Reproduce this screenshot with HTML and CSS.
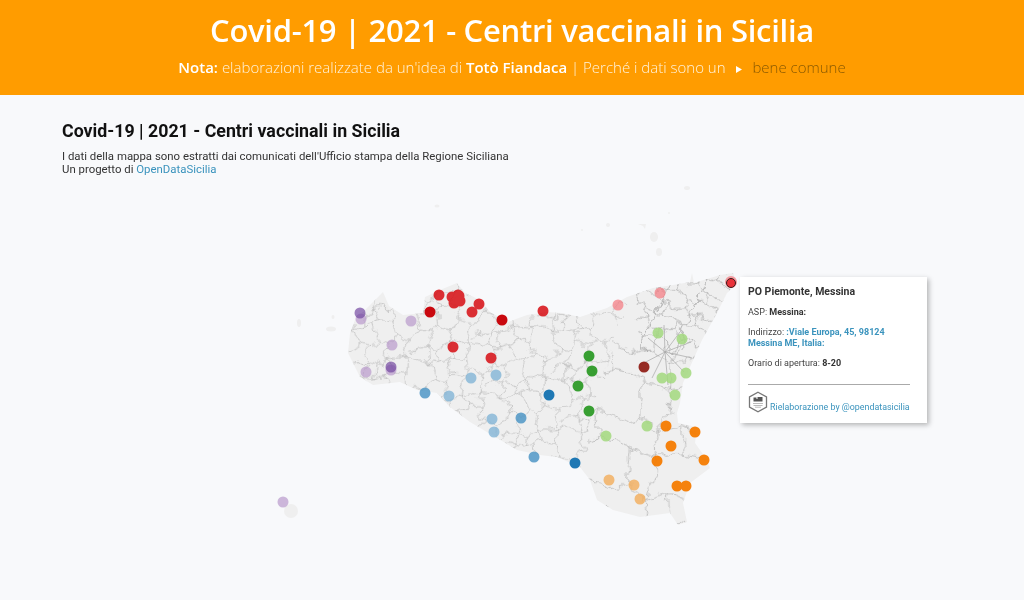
FILE: index.html
```html
<!DOCTYPE html>
<html lang="it">
<head>
<meta charset="utf-8">
<title>Covid-19 | 2021 - Centri vaccinali in Sicilia</title>
<link rel="stylesheet" href="styles.css">
</head>
<body>
<header class="banner">
  <h1 class="banner-title">Covid-19 | 2021 - Centri vaccinali in Sicilia</h1>
  <p class="banner-note"><b>Nota:</b> elaborazioni realizzate da un'idea di <b>Totò Fiandaca</b> | Perché i dati sono un <svg class="arrow" viewBox="0 0 6 7" aria-hidden="true"><path d="M0 0L6 3.500L0 7Z"/></svg> <span class="common">bene comune</span></p>
</header>
<main class="content">
  <svg class="map" viewBox="0 95 1024 505" aria-hidden="true">
    <defs>
      <pattern id="cellsA" width="104" height="84" patternUnits="userSpaceOnUse" patternTransform="rotate(-14) scale(0.62)">
        <path class="mesh" d="M0 14L14 8L30 16L42 6L60 14L74 8L90 18L104 14M14 8L12 0M12 84L9 62L0 56M9 62L24 66L30 46L14 38L9 62M14 38L0 34M14 38L30 16M30 46L48 40L60 14M48 40L54 64L24 66M54 64L72 70L80 46L48 40M80 46L90 18M80 46L104 56M72 70L70 84M70 0L74 8M42 6L42 0M42 84L40 65M90 40L104 34"/>
      </pattern>
      <pattern id="cellsB" width="120" height="96" patternUnits="userSpaceOnUse" patternTransform="rotate(11) scale(0.72)">
        <path class="mesh" d="M0 24L24 14L50 30L82 16L120 24M24 14L22 0M22 96L18 60L0 54M18 60L56 66L50 30M56 66L92 54L82 16M92 54L120 54M56 66L62 96M62 0L50 30"/>
      </pattern>
      <pattern id="cellsC" width="38" height="30" patternUnits="userSpaceOnUse" patternTransform="rotate(24) scale(0.85)">
        <path class="mesh" d="M0 8L10 3L19 10L28 5L38 8M10 3V0M10 30L7 20L0 18M7 20L19 23L19 10M19 23L30 19L28 5M30 19L38 18M19 23V30M19 0V10"/>
      </pattern>
      <filter id="wiggle" filterUnits="userSpaceOnUse" x="250" y="250" width="520" height="300">
        <feTurbulence type="fractalNoise" baseFrequency="0.075" numOctaves="3" seed="11"/>
        <feDisplacementMap in="SourceGraphic" scale="14" xChannelSelector="R" yChannelSelector="G"/>
      </filter>
      <clipPath id="island">
        <path d="M383 292L389 306L403 315L423 313L425 297L440 290L457 283L465 293L480 300L490 312L508 322L527 315L547 312L562 313L580 317L607 308L627 297L653 288L673 285L690 282L692 273L694 283L720 275L733 273L737 283L727 293L717 313L702 340L690 367L683 383L680 403L677 413L678 423L697 427L695 443L707 460L710 468L690 483L683 503L687 522L678 525L670 513L640 517L613 510L597 500L590 480L580 467L557 457L540 455L517 450L497 438L470 422L450 407L437 393L417 390L400 382L373 385L360 377L348 353L350 333L355 320L373 302L380 295Z"/>
      </clipPath>
      <clipPath id="zoneWest"><path d="M330 260H640L600 380L580 480H330Z"/></clipPath>
      <clipPath id="zoneSouth"><path d="M640 270L600 380L580 480L600 540H750V330L640 330Z"/></clipPath>
      <clipPath id="zoneNorth"><path d="M632 270H755L700 350H640Z"/></clipPath>
    </defs>

    <g class="islets">
      <ellipse cx="687" cy="188" rx="3" ry="2"/>
      <path d="M638 224L646 224L645 229L643 226Z"/>
      <ellipse cx="654" cy="237" rx="4" ry="5"/>
      <ellipse cx="659" cy="252" rx="3" ry="4"/>
      <ellipse cx="608" cy="225" rx="2" ry="2"/>
      <ellipse cx="582" cy="230" rx="1" ry="1"/>
      <ellipse cx="669" cy="213" rx="1" ry="1"/>
      <ellipse cx="437" cy="206" rx="2.500" ry="1.500"/>
      <ellipse cx="299" cy="323" rx="2" ry="4"/>
      <ellipse cx="331" cy="329" rx="5" ry="2.500"/>
      <ellipse cx="333" cy="317" rx="1.500" ry="2"/>
      <ellipse cx="291" cy="511" rx="7" ry="7"/>
    </g>

    <path class="land" d="M383 292L389 306L403 315L423 313L425 297L440 290L457 283L465 293L480 300L490 312L508 322L527 315L547 312L562 313L580 317L607 308L627 297L653 288L673 285L690 282L692 273L694 283L720 275L733 273L737 283L727 293L717 313L702 340L690 367L683 383L680 403L677 413L678 423L697 427L695 443L707 460L710 468L690 483L683 503L687 522L678 525L670 513L640 517L613 510L597 500L590 480L580 467L557 457L540 455L517 450L497 438L470 422L450 407L437 393L417 390L400 382L373 385L360 377L348 353L350 333L355 320L373 302L380 295Z"/>

    <g clip-path="url(#island)">
      <g class="borders">
        <g clip-path="url(#zoneWest)"><rect class="fill-a" x="330" y="260" width="320" height="220"/></g>
        <g clip-path="url(#zoneSouth)"><rect class="fill-b" x="580" y="320" width="170" height="220"/></g>
        <g clip-path="url(#zoneNorth)"><rect class="fill-c" x="632" y="265" width="120" height="90"/></g>
      </g>
      <path class="rays" d="M665 352L640 365M665 352L648 338M665 352L664 325M665 352L680 332M665 352L691 342M665 352L692 358M665 352L684 372M665 352L668 385M665 352L652 378"/>
    </g>

    <g class="d-purple">
      <circle cx="361" cy="319" r="5.500"/><circle cx="411" cy="321" r="5.500"/><circle cx="392" cy="345" r="5.500"/>
      <circle cx="391" cy="370" r="5.500"/><circle cx="366" cy="372" r="5.500"/><circle cx="283" cy="502" r="5.500"/>
    </g>
    <g class="d-purple-dark">
      <circle cx="360" cy="313" r="5.500"/><circle cx="391" cy="367" r="5.500"/>
    </g>
    <g class="d-red">
      <circle cx="439" cy="295" r="5.500"/><circle cx="452" cy="297" r="5.500"/><circle cx="458" cy="295" r="5.500"/>
      <circle cx="459" cy="296" r="5.500"/><circle cx="454" cy="303" r="5.500"/><circle cx="460" cy="301" r="5.500"/>
      <circle cx="479" cy="304" r="5.500"/><circle cx="472" cy="312" r="5.500"/><circle cx="543" cy="311" r="5.500"/>
      <circle cx="453" cy="347" r="5.500"/><circle cx="491" cy="358" r="5.500"/>
    </g>
    <g class="d-red-dark">
      <circle cx="430" cy="312" r="5.500"/><circle cx="502" cy="320" r="5.500"/>
    </g>
    <g class="d-pink">
      <circle cx="618" cy="305" r="5.500"/><circle cx="660" cy="293" r="5.500"/><circle cx="731" cy="282" r="6"/>
    </g>
    <circle class="d-selected" cx="731" cy="283" r="4.500"/>
    <circle class="d-maroon" cx="644" cy="367" r="5.500"/>
    <g class="d-green">
      <circle cx="589" cy="356" r="5.500"/><circle cx="592" cy="371" r="5.500"/><circle cx="578" cy="386" r="5.500"/><circle cx="589" cy="411" r="5.500"/>
    </g>
    <g class="d-lime">
      <circle cx="658" cy="333" r="5.500"/><circle cx="682" cy="339" r="5.500"/><circle cx="662" cy="378" r="5.500"/>
      <circle cx="671" cy="378" r="5.500"/><circle cx="686" cy="373" r="5.500"/><circle cx="675" cy="395" r="5.500"/>
      <circle cx="647" cy="426" r="5.500"/><circle cx="606" cy="436" r="5.500"/>
    </g>
    <g class="d-blue-light">
      <circle cx="449" cy="396" r="5.500"/><circle cx="471" cy="378" r="5.500"/><circle cx="496" cy="375" r="5.500"/>
      <circle cx="492" cy="419" r="5.500"/><circle cx="494" cy="432" r="5.500"/>
    </g>
    <g class="d-blue-mid">
      <circle cx="425" cy="393" r="5.500"/><circle cx="521" cy="418" r="5.500"/><circle cx="534" cy="457" r="5.500"/>
    </g>
    <g class="d-blue">
      <circle cx="549" cy="395" r="5.500"/><circle cx="575" cy="463" r="5.500"/>
    </g>
    <g class="d-orange">
      <circle cx="666" cy="426" r="5.500"/><circle cx="695" cy="432" r="5.500"/><circle cx="671" cy="446" r="5.500"/>
      <circle cx="657" cy="461" r="5.500"/><circle cx="704" cy="460" r="5.500"/><circle cx="677" cy="486" r="5.500"/><circle cx="686" cy="486" r="5.500"/>
    </g>
    <g class="d-peach">
      <circle cx="609" cy="480" r="5.500"/><circle cx="634" cy="485" r="5.500"/><circle cx="640" cy="499" r="5.500"/>
    </g>
  </svg>

  <section class="intro">
    <h2 class="intro-title">Covid-19 | 2021 - Centri vaccinali in Sicilia</h2>
    <p class="intro-text">I dati della mappa sono estratti dai comunicati dell'Ufficio stampa della Regione Siciliana<br>Un progetto di <a class="link" href="#">OpenDataSicilia</a></p>
  </section>

  <aside class="popup">
    <h3 class="popup-title">PO Piemonte, Messina</h3>
    <p class="popup-line">ASP: <b>Messina:</b></p>
    <p class="popup-line">Indirizzo: <a class="link strong" href="#">:Viale Europa, 45, 98124 Messina ME, Italia:</a></p>
    <p class="popup-line">Orario di apertura: <b>8-20</b></p>
    <hr class="popup-rule">
    <div class="popup-foot">
      <svg class="logo" viewBox="0 0 20 22" aria-hidden="true">
        <path class="logo-hex" d="M10 1.200L18.500 6V16L10 20.800L1.500 16V6Z"/>
        <path class="logo-mark" d="M5.500 6.500H8.500V8H9.500V6H14.500V10.500H5.500Z"/>
        <path class="logo-line" d="M5 12.500H15M5.500 14.500H14.500M7 16.200H13"/>
      </svg>
      <a class="link foot-link" href="#">Rielaborazione by @opendatasicilia</a>
    </div>
  </aside>
</main>
</body>
</html>
```
FILE: styles.css
```css
* { box-sizing: border-box; }
html, body { height: 100%; }
body {
  margin: 0;
  overflow: hidden;
  background: #f8f9fb;
  font-family: Roboto, "Liberation Sans", sans-serif;
  color: #222;
}
.banner {
  height: 95px;
  background: #ff9c00;
  color: #fff;
  text-align: center;
  padding-top: 9px;
}
.banner-title {
  margin: 0;
  font: 600 31px/42px "Open Sans", sans-serif;
  letter-spacing: -0.28px;
  filter: blur(0.3px);
}
.banner-note {
  margin: 6px 0 0;
  font: 300 15px/20px "Open Sans", sans-serif;
  color: #fff3dc;
  filter: blur(0.3px);
}
.banner-note b { font-weight: 600; color: #fff; }
.arrow { width: 6px; height: 7px; margin: 0 6px 0 7px; fill: #fff; }
.common { color: #8a5a00; }

.content { position: relative; height: 505px; }
.map { position: absolute; left: 0; top: 0; width: 1024px; height: 505px; filter: blur(0.3px); }
.islets { fill: #efefef; }
.land { fill: #efefef; }
.mesh { fill: none; stroke: #a8a8a8; stroke-width: 0.9; }
.borders { filter: url(#wiggle); }
.fill-a { fill: url(#cellsA); }
.fill-b { fill: url(#cellsB); }
.fill-c { fill: url(#cellsC); }
.rays { fill: none; stroke: #a8a8a8; stroke-width: 0.7; }

.d-purple { fill: #b99bcc; opacity: 0.7; }
.d-purple-dark { fill: #6a3d9a; opacity: 0.65; }
.d-red { fill: #d8141a; opacity: 0.88; }
.d-red-dark { fill: #c80008; opacity: 0.97; }
.d-pink { fill: #f47f86; opacity: 0.75; }
.d-selected { fill: #e9323a; stroke: #3a1a1a; stroke-width: 1; }
.d-maroon { fill: #8e1a12; opacity: 0.92; }
.d-green { fill: #2e9a28; opacity: 0.95; }
.d-lime { fill: #a3d97e; opacity: 0.85; }
.d-blue-light { fill: #82b5d6; opacity: 0.8; }
.d-blue-mid { fill: #4f97c6; opacity: 0.85; }
.d-blue { fill: #1f78b4; }
.d-orange { fill: #f57c00; opacity: 0.95; }
.d-peach { fill: #f2b163; opacity: 0.85; }

.intro { position: relative; padding: 26px 0 0 62px; filter: blur(0.25px); }
.intro-title {
  margin: 0;
  font: 700 17.800px/20px Roboto, sans-serif;
  color: #111;
}
.intro-text {
  margin: 9px 0 0;
  font: 400 11.400px/13px Roboto, sans-serif;
  color: #333;
}
.link { color: #3a93bd; text-decoration: none; }
.strong { font-weight: 700; }

.popup {
  position: absolute;
  left: 740px;
  top: 182px;
  width: 187px;
  height: 146px;
  padding: 8px 17px 0 8px;
  background: #fff;
  box-shadow: 2px 2px 5px rgba(0, 0, 0, 0.28);
  font-size: 9px;
  line-height: 11px;
  color: #444;
}
.popup-title {
  margin: 0;
  font: 700 10.500px/13px Roboto, sans-serif;
  color: #333;
}
.popup-line { margin: 9px 0 0; }
.popup-line b { color: #333; }
.popup-rule {
  margin: 15px 0 0;
  border: 0;
  border-top: 1px solid #aaa;
}
.popup-foot {
  display: flex;
  align-items: flex-end;
  gap: 2px;
  margin-top: 6px;
}
.foot-link { white-space: nowrap; font-size: 8.900px; }
.logo { width: 20px; height: 22px; flex: none; }
.logo-hex { fill: #fff; stroke: #777; stroke-width: 1.300; }
.logo-mark { fill: #555; }
.logo-line { fill: none; stroke: #aaa; stroke-width: 0.8; }
```
